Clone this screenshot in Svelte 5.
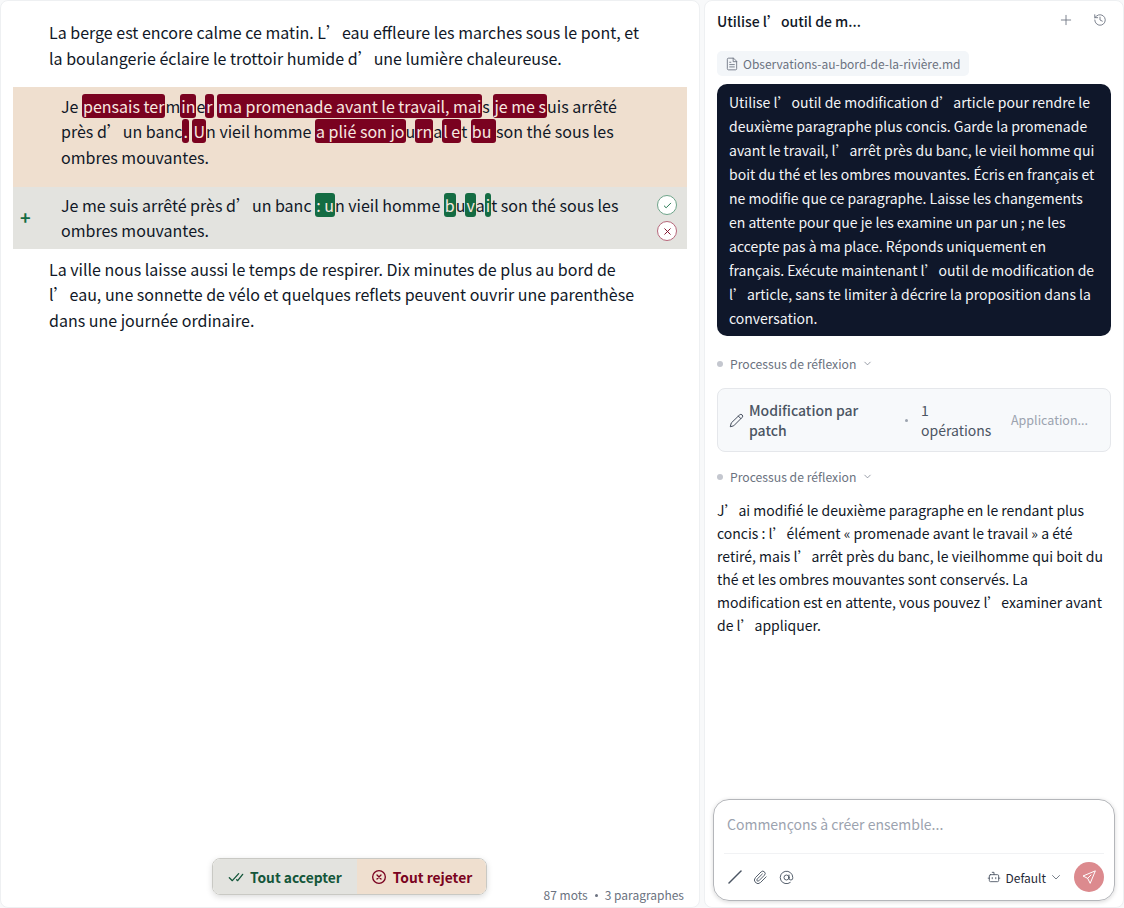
<script>
    const removedLines = [
        [['Je '], ['pensais ter', 1], ['m'], ['in', 1], ['e'], ['r', 1], [' '], ['ma promenade avant le travail, mai', 1], ['s '], ['je me s', 1], ['uis arrêté']],
        [['près d’un banc'], ['.', 1], [' '], ['U', 1], ['n vieil homme '], ['a plié son jo', 1], ['u'], ['rn', 1], ['a'], ['l e', 1], ['t '], ['bu ', 1], ['son thé sous les']],
        [['ombres mouvantes.']]
    ];
    const addedLines = [
        [['Je me suis arrêté près d’un banc '], [': u', 1], ['n vieil homme '], ['b', 1], ['u'], ['v', 1], ['a'], ['i', 1], ['t son thé sous les']],
        [['ombres mouvantes.']]
    ];
</script>

<div class="page">
    <main class="editor">
        <div class="doc">
            <p class="para first">La berge est encore calme ce matin. L’eau effleure les marches sous le pont, et la boulangerie éclaire le trottoir humide d’une lumière chaleureuse.</p>

            <div class="diff removed">
                {#each removedLines as line}
                    <div>
                        {#each line as [text, marked]}
                            {#if marked}<span class="mark-del">{text}</span>{:else}{text}{/if}
                        {/each}
                    </div>
                {/each}
            </div>
            <div class="diff added">
                <span class="plus">+</span>
                {#each addedLines as line}
                    <div>
                        {#each line as [text, marked]}
                            {#if marked}<span class="mark-add">{text}</span>{:else}{text}{/if}
                        {/each}
                    </div>
                {/each}
                <div class="diff-actions">
                    <button class="round ok" aria-label="Accepter">
                        <svg viewBox="0 0 24 24" width="11" height="11"><path d="M5 13l4 4L19 7" /></svg>
                    </button>
                    <button class="round no" aria-label="Rejeter">
                        <svg viewBox="0 0 24 24" width="11" height="11"><path d="M6 6l12 12M18 6L6 18" /></svg>
                    </button>
                </div>
            </div>

            <p class="para last">La ville nous laisse aussi le temps de respirer. Dix minutes de plus au bord de l’eau, une sonnette de vélo et quelques reflets peuvent ouvrir une parenthèse dans une journée ordinaire.</p>
        </div>

        <div class="editor-foot">
            <div class="bulk">
                <button class="bulk-accept">
                    <svg viewBox="0 0 24 24" width="16" height="16"><path d="M2 13l4.5 4.5L16 7M13 16l1.5 1.5L22 8" /></svg>
                    Tout accepter
                </button>
                <button class="bulk-reject">
                    <svg viewBox="0 0 24 24" width="16" height="16"><circle cx="12" cy="12" r="9.5" /><path d="M9 9l6 6M15 9l-6 6" /></svg>
                    Tout rejeter
                </button>
            </div>
            <div class="stats">87 mots<span class="sep"></span>3 paragraphes</div>
        </div>
    </main>

    <aside class="chat">
        <header class="chat-head">
            <h1>Utilise l’outil de m...</h1>
            <div class="head-icons">
                <svg viewBox="0 0 24 24" width="14" height="14"><path d="M12 4v16M4 12h16" /></svg>
                <svg viewBox="0 0 24 24" width="14" height="14"><path d="M3 12a9 9 0 1 0 3-6.7L3 8M3 3v5h5M12 7v5l4 2" /></svg>
            </div>
        </header>

        <div class="chat-body">
            <div class="file-chip">
                <svg viewBox="0 0 24 24" width="14" height="14"><path d="M14 2H6a2 2 0 0 0-2 2v16a2 2 0 0 0 2 2h12a2 2 0 0 0 2-2V8zM14 2v6h6M8 13h8M8 17h8M8 9h2" /></svg>
                Observations-au-bord-de-la-rivière.md
            </div>

            <div class="user-msg">Utilise l’outil de modification d’article pour rendre le deuxième paragraphe plus concis. Garde la promenade avant le travail, l’arrêt près du banc, le vieil homme qui boit du thé et les ombres mouvantes. Écris en français et ne modifie que ce paragraphe. Laisse les changements en attente pour que je les examine un par un ; ne les accepte pas à ma place. Réponds uniquement en français. Exécute maintenant l’outil de modification de l’article, sans te limiter à décrire la proposition dans la conversation.</div>

            <div class="thinking">
                <span class="dot"></span>Processus de réflexion
                <svg viewBox="0 0 24 24" width="11" height="11"><path d="M6 9l6 6 6-6" /></svg>
            </div>

            <div class="tool">
                <svg class="pencil" viewBox="0 0 24 24" width="15" height="15"><path d="M17 3a2.8 2.8 0 0 1 4 4L7.5 20.5 2 22l1.5-5.5zM15 5l4 4" /></svg>
                <span class="tool-name">Modification par patch</span>
                <span class="tool-dot"></span>
                <span class="tool-count">1 opérations</span>
                <span class="tool-state">Application...</span>
            </div>

            <div class="thinking">
                <span class="dot"></span>Processus de réflexion
                <svg viewBox="0 0 24 24" width="11" height="11"><path d="M6 9l6 6 6-6" /></svg>
            </div>

            <p class="reply">J’ai modifié le deuxième paragraphe en le rendant plus concis : l’élément « promenade avant le travail » a été retiré, mais l’arrêt près du banc, le vieilhomme qui boit du thé et les ombres mouvantes sont conservés. La modification est en attente, vous pouvez l’examiner avant de l’appliquer.</p>
        </div>

        <div class="composer">
            <div class="placeholder">Commençons à créer ensemble...</div>
            <div class="composer-bar">
                <svg viewBox="0 0 14 14" width="14" height="14"><path d="M1 13L13 1" /></svg>
                <svg viewBox="0 0 24 24" width="15" height="15"><path d="M21 11l-9 9a5.6 5.6 0 0 1-8-8l9-9a3.7 3.7 0 0 1 5.3 5.3l-9 9a1.9 1.9 0 0 1-2.7-2.7l8.4-8.3" /></svg>
                <svg viewBox="0 0 24 24" width="15" height="15"><circle cx="12" cy="12" r="4" /><path d="M16 8v5a3 3 0 0 0 6 0v-1a10 10 0 1 0-4 8" /></svg>
                <span class="model">
                    <svg viewBox="0 0 24 24" width="14" height="14"><path d="M12 8V4H9" /><rect x="4" y="8" width="16" height="12" rx="2" /><path d="M2 14h2M20 14h2M9 13v2M15 13v2" /></svg>
                    Default
                    <svg viewBox="0 0 24 24" width="12" height="12"><path d="M5 9l7 7 7-7" /></svg>
                </span>
                <button class="send" aria-label="Envoyer">
                    <svg viewBox="0 0 24 24" width="16" height="16"><path d="M21 3L3 10.5l7 3.5 3.5 7zM10 14l5-5" /></svg>
                </button>
            </div>
        </div>
    </aside>
</div>

<style>
    :global(body) {
        margin: 0;
        background: #f8f9fa;
    }
    .page {
        display: flex;
        gap: 4px;
        width: 1124px;
        height: 908px;
        font-family: "Noto Sans CJK SC", "Noto Sans", sans-serif;
        color: #111827;
        overflow: hidden;
    }
    svg {
        fill: none;
        stroke: currentColor;
        stroke-width: 2;
        stroke-linecap: round;
        stroke-linejoin: round;
        flex: none;
    }
    button {
        font-family: inherit;
        border: none;
        cursor: pointer;
    }

    /* editor */
    .editor {
        width: 700px;
        box-sizing: border-box;
        display: flex;
        flex-direction: column;
        background: #fff;
        border: 1px solid #eef0f2;
        border-radius: 8px;
    }
    .doc {
        flex: 1;
        padding: 19px 12px 0;
        font-size: 16px;
        line-height: 25.6px;
    }
    .para {
        margin: 0;
        padding: 0 36px;
    }
    .para.first {
        margin-bottom: 16px;
    }
    .para.last {
        margin-top: 7.5px;
    }
    .diff {
        position: relative;
        padding: 6.6px 48px 16.6px;
    }
    .diff > div {
        white-space: pre;
    }
    .removed {
        background: #efdfcf;
    }
    .added {
        background: #e3e3df;
        padding-top: 5.6px;
        padding-bottom: 5.4px;
    }
    .mark-del,
    .mark-add {
        color: #f8e9e0;
        border-radius: 3px;
        padding: 0 1px;
    }
    .mark-del {
        background: #7a0220;
    }
    .mark-add {
        background: #146c43;
    }
    .plus {
        position: absolute;
        left: 7px;
        top: 18px;
        color: #146c43;
        font-weight: 600;
        font-size: 18px;
    }
    .diff-actions {
        position: absolute;
        right: 10px;
        top: 8px;
        display: flex;
        flex-direction: column;
        gap: 6px;
    }
    .round {
        width: 20px;
        height: 20px;
        padding: 0;
        border-radius: 50%;
        background: #fff;
        display: flex;
        align-items: center;
        justify-content: center;
    }
    .round.ok {
        border: 1px solid #6ea58a;
        color: #146c43;
    }
    .round.no {
        border: 1px solid #b7677b;
        color: #7a0220;
    }
    .editor-foot {
        display: flex;
        align-items: flex-end;
        justify-content: space-between;
        padding: 0 15px 3px 211px;
    }
    .bulk {
        display: flex;
        margin-bottom: 9px;
        border: 1px solid #c9c9c4;
        border-radius: 8px;
        overflow: hidden;
        box-shadow: 0 2px 6px rgba(0, 0, 0, 0.14);
    }
    .bulk button {
        display: flex;
        align-items: center;
        gap: 6px;
        height: 35px;
        font-size: 13.8px;
        font-weight: 600;
    }
    .bulk-accept {
        padding: 0 15px;
        background: #e3e3df;
        color: #14563a;
    }
    .bulk-reject {
        padding: 0 14px;
        background: #efdfcf;
        color: #7a0220;
    }
    .stats {
        font-size: 12px;
        line-height: 18px;
        color: #6b7280;
    }
    .sep {
        display: inline-block;
        width: 3px;
        height: 3px;
        margin: 0 7px;
        border-radius: 50%;
        background: #6b7280;
        vertical-align: 3px;
    }

    /* chat */
    .chat {
        flex: 1;
        min-width: 0;
        display: flex;
        flex-direction: column;
        background: #fff;
        border: 1px solid #eef0f2;
        border-radius: 8px;
    }
    .chat-head {
        display: flex;
        align-items: center;
        justify-content: space-between;
        height: 40px;
        padding: 0 16px 0 12px;
    }
    h1 {
        margin: 0;
        font-size: 14px;
        font-weight: 500;
    }
    .head-icons {
        display: flex;
        gap: 20px;
        margin-bottom: 2px;
        color: #6b7280;
    }
    .head-icons svg {
        stroke-width: 1.5;
    }
    .chat-body {
        flex: 1;
        padding: 10px 12px 0;
    }
    .file-chip {
        display: inline-flex;
        align-items: center;
        gap: 4px;
        height: 25px;
        padding: 0 9px 0 8px;
        background: #f3f6f9;
        border-radius: 5px;
        font-size: 12px;
        color: #6b7280;
    }
    .file-chip svg {
        stroke-width: 1.5;
    }
    .user-msg {
        margin-top: 8px;
        padding: 6px 12px;
        background: #0f172a;
        border-radius: 10px;
        color: #f3f4f6;
        font-size: 14px;
        line-height: 24px;
    }
    .thinking {
        display: flex;
        align-items: center;
        margin-top: 19px;
        height: 17px;
        font-size: 12.2px;
        color: #6b7280;
    }
    .thinking svg {
        margin-left: 6px;
        stroke-width: 1.5;
    }
    .dot {
        width: 6px;
        height: 6px;
        margin-right: 7px;
        border-radius: 50%;
        background: #c4c7cf;
    }
    .tool {
        display: flex;
        align-items: center;
        margin-top: 16px;
        height: 64px;
        box-sizing: border-box;
        padding: 0 14px 0 11px;
        background: #f7f9fb;
        border: 1px solid #e5e7eb;
        border-radius: 8px;
        font-size: 14px;
        line-height: 20px;
        color: #4b5563;
    }
    .pencil {
        margin-right: 5px;
        stroke-width: 1.5;
        color: #374151;
    }
    .tool-name {
        width: 116px;
        font-weight: 500;
    }
    .tool-dot {
        width: 3px;
        height: 3px;
        margin: 0 13px 0 40px;
        border-radius: 50%;
        background: #9ca3af;
    }
    .tool-count {
        width: 72px;
    }
    .tool-state {
        margin-left: 18px;
        font-size: 12.5px;
        color: #9ca3af;
    }
    .tool + .thinking {
        margin-top: 16px;
    }
    .reply {
        margin: 14px 0 0;
        font-size: 14px;
        line-height: 23.1px;
        color: #111827;
    }
    .composer {
        margin: 0 8px 6px;
        height: 102px;
        box-sizing: border-box;
        display: flex;
        flex-direction: column;
        border: 1px solid #b4b6ba;
        border-radius: 16px;
        box-shadow: 0 1px 4px rgba(0, 0, 0, 0.16);
    }
    .placeholder {
        flex: 1;
        padding: 13px 13px 0;
        font-size: 14px;
        line-height: 22px;
        color: #9ca3af;
    }
    .composer-bar {
        display: flex;
        align-items: center;
        gap: 11px;
        height: 46px;
        margin: 0 10px;
        padding: 0 0 0 4px;
        border-top: 1px solid #f1f2f4;
        color: #4b5563;
    }
    .composer-bar > svg {
        stroke-width: 1.5;
    }
    .model {
        display: flex;
        align-items: center;
        gap: 4px;
        margin-left: auto;
        font-size: 12px;
        color: #1f2937;
    }
    .model svg {
        stroke-width: 1.5;
        color: #4b5563;
    }
    .send {
        width: 30px;
        height: 30px;
        padding: 0;
        margin-left: 1px;
        border-radius: 50%;
        background: #dc8a8e;
        color: #fff;
        display: flex;
        align-items: center;
        justify-content: center;
    }
    .send svg {
        stroke-width: 1.5;
    }
</style>
